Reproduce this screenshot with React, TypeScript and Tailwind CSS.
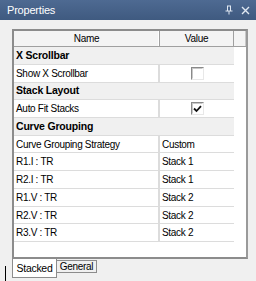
import React from "react";

type Row =
  | { kind: "cat"; label: string; h: string }
  | { kind: "prop"; label: string; value?: string; check?: boolean; h: string };

const rows: Row[] = [
  { kind: "cat", label: "X Scrollbar", h: "h-[18px]" },
  { kind: "prop", label: "Show X Scrollbar", check: false, h: "h-[18px]" },
  { kind: "cat", label: "Stack Layout", h: "h-[17px]" },
  { kind: "prop", label: "Auto Fit Stacks", check: true, h: "h-[18px]" },
  { kind: "cat", label: "Curve Grouping", h: "h-[18px]" },
  { kind: "prop", label: "Curve Grouping Strategy", value: "Custom", h: "h-[17px]" },
  { kind: "prop", label: "R1.I : TR", value: "Stack 1", h: "h-[18px]" },
  { kind: "prop", label: "R2.I : TR", value: "Stack 1", h: "h-[18px]" },
  { kind: "prop", label: "R1.V : TR", value: "Stack 2", h: "h-[18px]" },
  { kind: "prop", label: "R2.V : TR", value: "Stack 2", h: "h-[17px]" },
  { kind: "prop", label: "R3.V : TR", value: "Stack 2", h: "h-[18px]" },
];

function CheckBox({ checked }: { checked: boolean }) {
  return (
    <div className="w-[13px] h-[13px] border border-t-[#8a8a8a] border-l-[#8a8a8a] border-r-[#e8e8e8] border-b-[#e8e8e8] bg-white flex">
      <div className="flex-1 border border-t-[#c8c8c8] border-l-[#c8c8c8] border-r-white border-b-white flex items-center justify-center">
        {checked && (
          <svg width="9" height="8" viewBox="0 0 9 8">
            <path d="M1 3.5 L3.5 6 L8 1.2" stroke="#111" strokeWidth="1.8" fill="none" />
          </svg>
        )}
      </div>
    </div>
  );
}

export default function App() {
  return (
    <div className="w-[256px] h-[281px] bg-[#f0f0f0] relative overflow-hidden font-['Liberation_Sans',Arial,sans-serif] text-black">
      {/* Title bar */}
      <div className="h-[20px] bg-gradient-to-b from-[#4e6a92] to-[#3f5a80] flex items-center justify-between pl-[7px] pr-[6px]">
        <span className="text-white text-[11px] tracking-[-0.2px]">Properties</span>
        <div className="flex items-center gap-[8px] text-[#e8eef6]">
          <svg width="8" height="10" viewBox="0 0 8 10">
            <path d="M2 1 H6 M2.5 1 V6 M5.5 1 V6 M0.5 6 H7.5 M4 6 V9.5" stroke="#e0e8f2" strokeWidth="1" fill="none" />
          </svg>
          <svg width="9" height="9" viewBox="0 0 9 9">
            <path d="M1 1 L8 8 M8 1 L1 8" stroke="#e0e8f2" strokeWidth="1.4" fill="none" />
          </svg>
        </div>
      </div>

      {/* Grid frame */}
      <div className="pl-[12px] pr-[8px] pt-[9px]">
        <div className="h-[230px] border-2 border-t-[#8c8c8c] border-l-[#8c8c8c] border-r-[#9a9a9a] border-b-[#8c8c8c] bg-white flex flex-col">
          {/* header */}
          <div className="h-[16px] flex text-[10px] tracking-[-0.3px] bg-[#f4f4f4] border-b border-[#a0a0a0]">
            <div className="w-[146px] flex items-center justify-center border-r border-[#a0a0a0] shadow-[inset_-1px_0_0_#fff]">Name</div>
            <div className="w-[74px] flex items-center justify-center border-r border-[#a0a0a0]">Value</div>
            <div className="flex-1 border-r border-[#c8c8c8]"></div>
          </div>
          <div className="w-[220px] flex flex-col">
            {rows.map((r, i) =>
              r.kind === "cat" ? (
                <div
                  key={i}
                  className={`${r.h} bg-[#f0f0f0] border-b border-[#dcdcdc] flex items-center pl-[2px] font-bold text-[10.5px] tracking-[-0.2px]`}
                >
                  {r.label}
                </div>
              ) : (
                <div key={i} className={`${r.h} flex border-b border-[#dcdcdc] text-[10px] tracking-[-0.3px]`}>
                  <div className="w-[146px] flex items-center pl-[2px] border-r-2 border-[#dcdcdc]">{r.label}</div>
                  <div className="flex-1 flex items-center pl-[2px]">
                    {r.check !== undefined ? (
                      <div className="w-full flex justify-center pr-[1px]">
                        <CheckBox checked={r.check} />
                      </div>
                    ) : (
                      r.value
                    )}
                  </div>
                </div>
              )
            )}
          </div>
        </div>
      </div>

      {/* Tabs */}
      <div className="flex items-start pl-[12px]">
        <div className="h-[19px] w-[45px] bg-white border border-t-0 border-[#8c8c8c] flex items-center justify-center text-[10.5px] tracking-[-0.3px] pt-[2px]">
          Stacked
        </div>
        <div className="mt-[1px] h-[13px] w-[40px] bg-[#f0f0f0] border border-l-0 border-[#8c8c8c] flex items-center justify-center text-[10px] tracking-[-0.3px]">
          General
        </div>
      </div>

      <div className="absolute left-[5px] top-[266px] w-[1px] h-[15px] bg-black"></div>
    </div>
  );
}
